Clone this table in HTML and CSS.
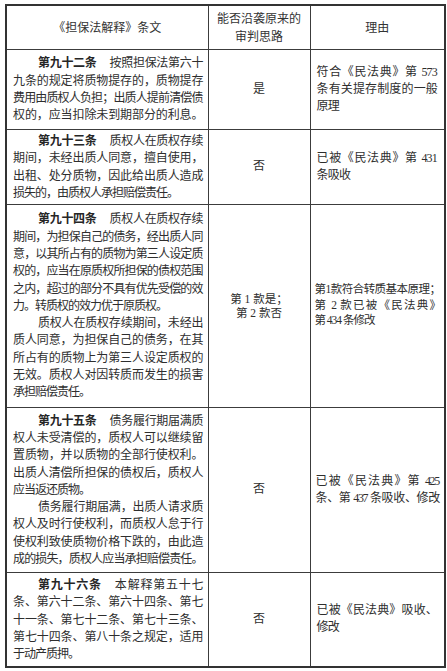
FILE: index.html
```html
<!DOCTYPE html>
<html lang="zh-CN">
<head>
<meta charset="utf-8">
<title>担保法解释条文对照</title>
<link rel="stylesheet" href="styles.css">
</head>
<body>
<table class="tbl">
  <colgroup>
    <col class="w1"><col class="w2"><col class="w3">
  </colgroup>
  <tr class="r0">
    <th class="hd">《担保法解释》条文</th>
    <th class="hd"><div>能否沿袭原来的</div><div>审判思路</div></th>
    <th class="hd">理由</th>
  </tr>
  <tr class="r1">
    <td class="c1">
      <div class="ln ind"><span class="art">第九十二条</span>按照担保法第六十</div>
      <div class="ln">九条的规定将质物提存的，质物提存</div>
      <div class="ln">费用由质权人负担；出质人提前清偿债</div>
      <div class="ln">权的，应当扣除未到期部分的利息。</div>
    </td>
    <td class="c2">是</td>
    <td class="c3">
      <div class="ln">符合《民法典》第 573</div>
      <div class="ln">条有关提存制度的一般</div>
      <div class="end">原理</div>
    </td>
  </tr>
  <tr class="r2">
    <td class="c1">
      <div class="ln ind"><span class="art">第九十三条</span>质权人在质权存续</div>
      <div class="ln">期间，未经出质人同意，擅自使用，</div>
      <div class="ln">出租、处分质物，因此给出质人造成</div>
      <div class="end">损失的，由质权人承担赔偿责任。</div>
    </td>
    <td class="c2">否</td>
    <td class="c3">
      <div class="ln">已被《民法典》第 431</div>
      <div class="end">条吸收</div>
    </td>
  </tr>
  <tr class="r3">
    <td class="c1">
      <div class="ln ind"><span class="art">第九十四条</span>质权人在质权存续</div>
      <div class="ln">期间，为担保自己的债务，经出质人同</div>
      <div class="ln">意，以其所占有的质物为第三人设定质</div>
      <div class="ln">权的，应当在原质权所担保的债权范围</div>
      <div class="ln">之内，超过的部分不具有优先受偿的效</div>
      <div class="end">力。转质权的效力优于原质权。</div>
      <div class="ln ind">质权人在质权存续期间，未经出</div>
      <div class="ln">质人同意，为担保自己的债务，在其</div>
      <div class="ln">所占有的质物上为第三人设定质权的</div>
      <div class="ln">无效。质权人对因转质而发生的损害</div>
      <div class="end">承担赔偿责任。</div>
    </td>
    <td class="c2 small"><div>第 1 款是；</div><div>第 2 款否</div></td>
    <td class="c3 r3c">
      <div class="ln">第1款符合转质基本原理；</div>
      <div class="ln">第 2 款已被《民法典》</div>
      <div class="end">第 434 条修改</div>
    </td>
  </tr>
  <tr class="r4">
    <td class="c1">
      <div class="ln ind"><span class="art">第九十五条</span>债务履行期届满质</div>
      <div class="ln">权人未受清偿的，质权人可以继续留</div>
      <div class="ln">置质物，并以质物的全部行使权利。</div>
      <div class="ln">出质人清偿所担保的债权后，质权人</div>
      <div class="end">应当返还质物。</div>
      <div class="ln ind">债务履行期届满，出质人请求质</div>
      <div class="ln">权人及时行使权利，而质权人怠于行</div>
      <div class="ln">使权利致使质物价格下跌的，由此造</div>
      <div class="ln">成的损失，质权人应当承担赔偿责任。</div>
    </td>
    <td class="c2">否</td>
    <td class="c3 tight">
      <div class="ln">已被《民法典》第 425</div>
      <div class="ln">条、第 437 条吸收、修改</div>
    </td>
  </tr>
  <tr class="r5">
    <td class="c1">
      <div class="ln ind"><span class="art">第九十六条</span>本解释第五十七</div>
      <div class="ln">条、第六十二条、第六十四条、第七</div>
      <div class="ln">十一条、第七十二条、第七十三条、</div>
      <div class="ln">第七十四条、第八十条之规定，适用</div>
      <div class="end">于动产质押。</div>
    </td>
    <td class="c2">否</td>
    <td class="c3">
      <div class="ln">已被《民法典》吸收、</div>
      <div class="end">修改</div>
    </td>
  </tr>
</table>
</body>
</html>
```

FILE: styles.css
```css
html, body {
  margin: 0;
  padding: 0;
  background: #ffffff;
}

body {
  font-family: "Liberation Serif", "Noto Sans CJK SC", serif;
  color: #2e2e2e;
  font-size: 12px;
}

.tbl {
  border-collapse: collapse;
  table-layout: fixed;
  width: 439px;
  margin: 4px 0 0 5px;
  border: 2px solid #333333;
}

.w1 { width: 202px; }
.w2 { width: 102px; }
.w3 { width: 135px; }

.tbl th,
.tbl td {
  border: 1px solid #3c3c3c;
  padding: 0;
  vertical-align: middle;
}

.r0 { height: 44px; }
.r1 { height: 80px; }
.r2 { height: 75px; }
.r3 { height: 203px; }
.r4 { height: 165px; }
.r5 { height: 95px; }

.tbl .hd {
  font-family: "Noto Sans CJK SC", sans-serif;
  font-weight: normal;
  font-size: 12px;
  line-height: 18px;
  color: #333333;
  text-align: center;
}

.tbl .c1 {
  padding: 0 5px 0 6px;
  line-height: 17.3px;
  letter-spacing: -1px;
}

.tbl .c2 {
  text-align: center;
  line-height: 17px;
}

.tbl .c2.small {
  line-height: 14px;
  font-size: 11.5px;
}

.tbl .c3 {
  padding: 0 7px 0 6px;
  line-height: 17px;
  letter-spacing: -0.8px;
}

.tbl .c3.r3c {
  line-height: 15.5px;
  padding: 0 4px 0 4px;
  font-size: 11.5px;
  letter-spacing: -1px;
}

.tbl .c3.tight {
  padding: 0 5px 0 5px;
  letter-spacing: -1.3px;
}

.ln {
  text-align: justify;
  text-align-last: justify;
}

.end {
  text-align: left;
}

.ind {
  text-indent: 25px;
}

.art {
  font-family: "Noto Sans CJK SC", sans-serif;
  font-weight: bold;
  color: #262626;
  margin-right: 13px;
}
```
